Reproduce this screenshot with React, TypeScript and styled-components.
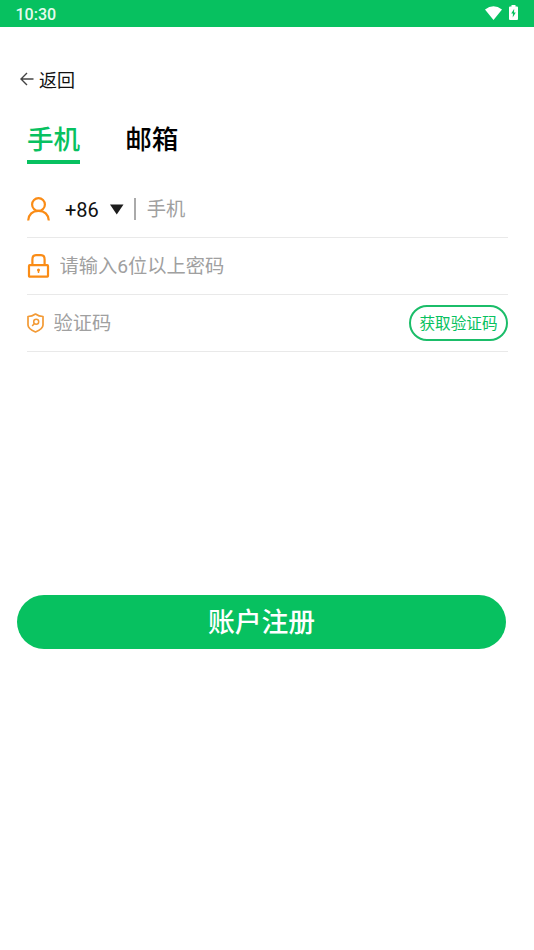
import React from 'react';
import styled, { createGlobalStyle } from 'styled-components';

const green = '#07c160';
const orange = '#fa8c16';

const GlobalStyle = createGlobalStyle`
  * { box-sizing: border-box; }
  body {
    margin: 0;
    background: #fff;
    color: #111;
    font-family: Roboto, "Noto Sans CJK SC", sans-serif;
  }
  button { border: 0; padding: 0; background: none; font-family: inherit; color: inherit; }
`;

const Screen = styled.main`
  display: flex;
  flex-direction: column;
  width: 100%;
  height: 950px;
  overflow: hidden;
`;

const StatusBar = styled.header`
  display: flex;
  align-items: center;
  justify-content: space-between;
  height: 27px;
  padding: 0 16px 0 15.5px;
  background: ${green};
  color: #e6faee;
`;

const Clock = styled.span`
  padding-top: 1px;
  font-size: 16px;
  font-weight: 500;
  line-height: 27px;
`;

const StatusIcons = styled.div`
  display: flex;
  align-items: center;
  gap: 7px;
  height: 27px;
  padding-bottom: 2px;
  color: #fff;
`;

const BackButton = styled.button`
  display: flex;
  align-items: center;
  align-self: flex-start;
  gap: 5px;
  height: 28px;
  margin: 39px 0 0 20px;
  padding-top: 2px;
  font-size: 18px;
  line-height: 28px;

  svg { margin-bottom: 4px; }
`;

const Tabs = styled.nav`
  display: flex;
  gap: 45px;
  margin: 24px 0 0 27px;
`;

const Tab = styled.button<{ $active?: boolean }>`
  height: 46px;
  border-bottom: 4px solid ${({ $active }) => ($active ? green : 'transparent')};
  color: ${({ $active }) => ($active ? green : '#000')};
  padding-top: 2px;
  font-size: 26.6px;
  font-weight: 500;
  line-height: 40px;
`;

const Form = styled.form`
  display: flex;
  flex-direction: column;
  margin: 17px 26px 0 27px;
`;

const Field = styled.div`
  display: flex;
  align-items: center;
  height: 57px;
  border-bottom: 1px solid #e9e9e9;

  svg { flex: none; }
`;

const Input = styled.input<{ $gap: number }>`
  flex: 1;
  min-width: 0;
  height: 40px;
  margin-left: ${({ $gap }) => $gap}px;
  padding: 1px 0 0;
  border: 0;
  outline: 0;
  background: transparent;
  font: 400 19.25px/39px Roboto, "Noto Sans CJK SC", sans-serif;

  &::placeholder { color: #a0a0a0; opacity: 1; }
`;

const CountryCode = styled.button`
  display: flex;
  align-items: center;
  gap: 11px;
  margin-left: 15px;
  padding-top: 1px;
  font-size: 20px;
  line-height: 30px;
`;

const Divider = styled.span`
  width: 2px;
  height: 22px;
  margin-left: 10px;
  background: #aaa;
`;

const CodeButton = styled.button`
  width: 99px;
  height: 36px;
  padding: 1px 0 0;
  border: 2px solid #1bbd69;
  border-radius: 18px;
  color: ${green};
  font-size: 15.6px;
  line-height: 32px;
`;

const SubmitButton = styled.button`
  height: 54px;
  margin: 243px 28px 0 17px;
  padding-top: 2px;
  border-radius: 27px;
  background: ${green};
  color: #fff;
  font-size: 26.8px;
  font-weight: 500;
  line-height: 52px;
`;

const WifiIcon = () => (
  <svg width="17" height="14" viewBox="0 0 17 14" fill="currentColor">
    <path d="M0 3.5Q8.500-3.200 17 3.500L8.500 14Z" />
  </svg>
);

const BatteryIcon = () => (
  <svg width="9" height="15" viewBox="0 0 9 15">
    <path d="M2.500 0H6.500V1.500H8Q9 1.500 9 2.500V14Q9 15 8 15H1Q0 15 0 14V2.500Q0 1.500 1 1.500H2.500Z" fill="#fff" />
    <path d="M5.200 3.800 2.200 8.500H4L3.700 12.500 6.800 7.500H5Z" fill={green} />
  </svg>
);

const ArrowIcon = () => (
  <svg width="14" height="14" viewBox="0 0 14 14" fill="none" stroke="#444" strokeWidth="1.4">
    <path d="M7 1 1 7 7 13M1 7H13.500" />
  </svg>
);

const UserIcon = () => (
  <svg width="23" height="24" viewBox="0 0 23 24" fill="none" stroke={orange} strokeWidth="2.200">
    <circle cx="11.500" cy="7.500" r="6.400" />
    <path d="M1.200 23.500C1.800 17.500 5.500 13.900 11.500 13.900S21.200 17.500 21.800 23.500" />
  </svg>
);

const LockIcon = () => (
  <svg width="23" height="24" viewBox="0 0 23 24" fill="none" stroke={orange} strokeWidth="2.200">
    <rect x="2" y="11.200" width="19" height="11.500" rx="0.700" />
    <path d="M5.400 11V5.500Q5.400 1.200 9 1.200H14Q17.600 1.200 17.600 5.500V11" />
    <circle cx="11.500" cy="16" r="1.500" fill={orange} stroke="none" />
    <path d="M11.500 16V19" strokeWidth="1.400" />
  </svg>
);

const ShieldIcon = () => (
  <svg width="17" height="20" viewBox="0 0 17 20" fill="none" stroke="#f39a35" strokeWidth="1.700" strokeLinejoin="round">
    <path d="M8.500 1Q12 3.300 16 3.500V12C16 15.500 12 17.500 8.500 19 5 17.500 1 15.500 1 12V3.500Q5 3.300 8.500 1Z" />
    <circle cx="9.200" cy="8.800" r="2.500" strokeWidth="1.500" />
    <path d="M7.400 10.600 5.200 13" strokeWidth="1.500" />
  </svg>
);

const CaretIcon = () => (
  <svg width="14" height="11" viewBox="0 0 14 11">
    <path d="M0 0.500H13.500L6.750 10.500Z" fill="#1d1d1d" />
  </svg>
);

export default function App() {
  return (
    <>
      <GlobalStyle />
      <Screen>
        <StatusBar>
          <Clock>10:30</Clock>
          <StatusIcons>
            <WifiIcon />
            <BatteryIcon />
          </StatusIcons>
        </StatusBar>
        <BackButton type="button">
          <ArrowIcon />
          返回
        </BackButton>
        <Tabs>
          <Tab type="button" $active>手机</Tab>
          <Tab type="button">邮箱</Tab>
        </Tabs>
        <Form>
          <Field>
            <UserIcon />
            <CountryCode type="button">
              +86
              <CaretIcon />
            </CountryCode>
            <Divider />
            <Input type="tel" placeholder="手机" $gap={11} />
          </Field>
          <Field>
            <LockIcon />
            <Input type="password" placeholder="请输入6位以上密码" $gap={9.5} />
          </Field>
          <Field>
            <ShieldIcon />
            <Input type="text" placeholder="验证码" $gap={9.5} />
            <CodeButton type="button">获取验证码</CodeButton>
          </Field>
        </Form>
        <SubmitButton type="button">账户注册</SubmitButton>
      </Screen>
    </>
  );
}
